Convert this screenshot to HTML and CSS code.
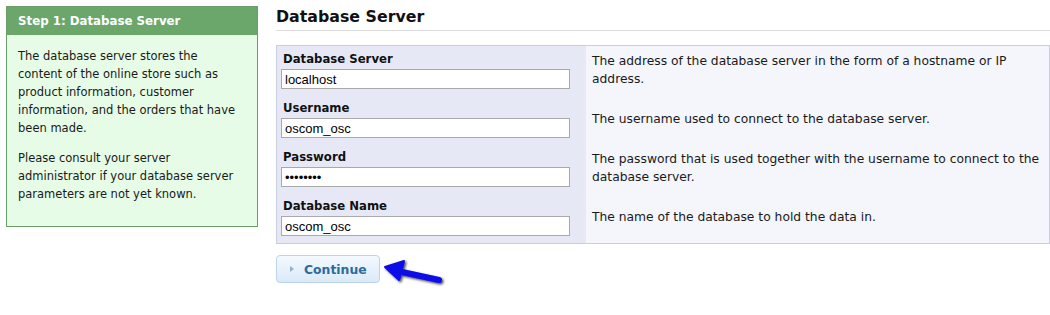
FILE: index.html
```html
<!DOCTYPE html>
<html>
<head>
<meta charset="utf-8">
<link rel="stylesheet" href="styles.css">
</head>
<body>
<div class="page">
  <aside class="sidebar">
    <div class="side-head">Step 1: Database Server</div>
    <div class="side-body">
      <p>The database server stores the<br>content of the online store such as<br>product information, customer<br>information, and the orders that have<br>been made.</p>
      <p>Please consult your server<br>administrator if your database server<br>parameters are not yet known.</p>
    </div>
  </aside>
  <main class="main">
    <h1 class="title">Database Server</h1>
    <div class="form">
      <div class="field">
        <label>Database Server</label>
        <input type="text" value="localhost">
      </div>
      <div class="desc">The address of the database server in the form of a hostname or IP<br>address.</div>
      <div class="field">
        <label>Username</label>
        <input type="text" value="oscom_osc">
      </div>
      <div class="desc">The username used to connect to the database server.</div>
      <div class="field">
        <label>Password</label>
        <input type="password" value="oscompwd">
      </div>
      <div class="desc">The password that is used together with the username to connect to the<br>database server.</div>
      <div class="field">
        <label>Database Name</label>
        <input type="text" value="oscom_osc">
      </div>
      <div class="desc">The name of the database to hold the data in.</div>
    </div>
    <div class="actions">
      <button class="btn"><span class="tri"></span>Continue</button>
      <svg class="arrow" width="64" height="30" viewBox="0 0 64 30">
        <defs>
          <filter id="sh" x="-20%" y="-40%" width="140%" height="180%">
            <feDropShadow dx="1.5" dy="1.5" stdDeviation="1.2" flood-color="#000" flood-opacity="0.7"/>
          </filter>
        </defs>
        <g filter="url(#sh)">
          <path d="M57 22 L20 14" stroke="#0a0ae8" stroke-width="6" stroke-linecap="round" fill="none"/>
          <path d="M3 9 L22 3 L17 22 Z" fill="#0a0ae8" stroke="#0a0ae8" stroke-width="2" stroke-linejoin="round"/>
        </g>
      </svg>
    </div>
  </main>
</div>
</body>
</html>
```
FILE: styles.css
```css
* { box-sizing: border-box; }
body {
  margin: 0;
  background: #fff;
  font-family: "DejaVu Sans", Verdana, sans-serif;
  font-size: 12.3px;
  color: #1a1a1a;
}
.page {
  display: flex;
  align-items: flex-start;
  padding: 6px 0 0 6px;
}
.sidebar {
  width: 252px;
  border: 1px solid #6a9f6a;
  background: #e6fce6;
  flex: none;
}
.side-head {
  background: #6ba76b;
  color: #fff;
  font-weight: bold;
  font-size: 11.8px;
  height: 28px;
  line-height: 28px;
  padding-left: 11px;
}
.side-body {
  padding: 12px 0 23px 11px;
  font-size: 11.5px;
  white-space: nowrap;
}
.side-body p {
  margin: 0 0 12px 0;
  line-height: 18px;
}
.side-body p:last-child { margin-bottom: 0; }
.main {
  margin-left: 18px;
  flex: 1;
  margin-top: 1px;
}
.title {
  margin: 0;
  font-size: 15.8px;
  font-weight: bold;
  color: #111;
  padding-bottom: 3px;
  border-bottom: 1px solid #dedede;
  line-height: 20px;
}
.form {
  margin-top: 14px;
  border: 1px solid #c9cfe0;
  display: grid;
  grid-template-columns: 309px 1fr;
  background: #f5f6fc;
}
.field {
  background: #e6e9f5;
  padding: 5px 15px 5px 4px;
  height: 49px;
}
.form .field:first-child { padding-top: 6px; height: 50px; }
.field label {
  display: block;
  font-weight: bold;
  font-size: 11.7px;
  color: #111;
  padding-left: 2px;
  line-height: 15px;
  margin-bottom: 2px;
}
.field input {
  display: block;
  width: 289px;
  height: 20px;
  border: 1px solid #a9a9a9;
  background: #fff;
  font-family: "Liberation Sans", Arial, sans-serif;
  font-size: 13px;
  padding: 0 3px;
  color: #000;
}
.desc {
  display: flex;
  align-items: center;
  padding: 0 0 3px 6px;
  line-height: 18px;
  white-space: nowrap;
}
.actions {
  display: flex;
  align-items: flex-start;
  margin-top: 11px;
}
.btn {
  width: 104px;
  height: 28px;
  border: 1px solid #b9d4ec;
  border-radius: 4px;
  background: linear-gradient(#f4f9fe, #dbeaf8);
  color: #2d6b9c;
  font-family: "DejaVu Sans", Verdana, sans-serif;
  font-weight: bold;
  font-size: 12.4px;
  display: flex;
  align-items: center;
  padding: 0 0 0 13px;
}
.tri {
  width: 0; height: 0;
  border-top: 3px solid transparent;
  border-bottom: 3px solid transparent;
  border-left: 4px solid #8fb2cf;
  margin-right: 10px;
}
.arrow {
  margin-left: 2px;
  margin-top: 3px;
}
```
